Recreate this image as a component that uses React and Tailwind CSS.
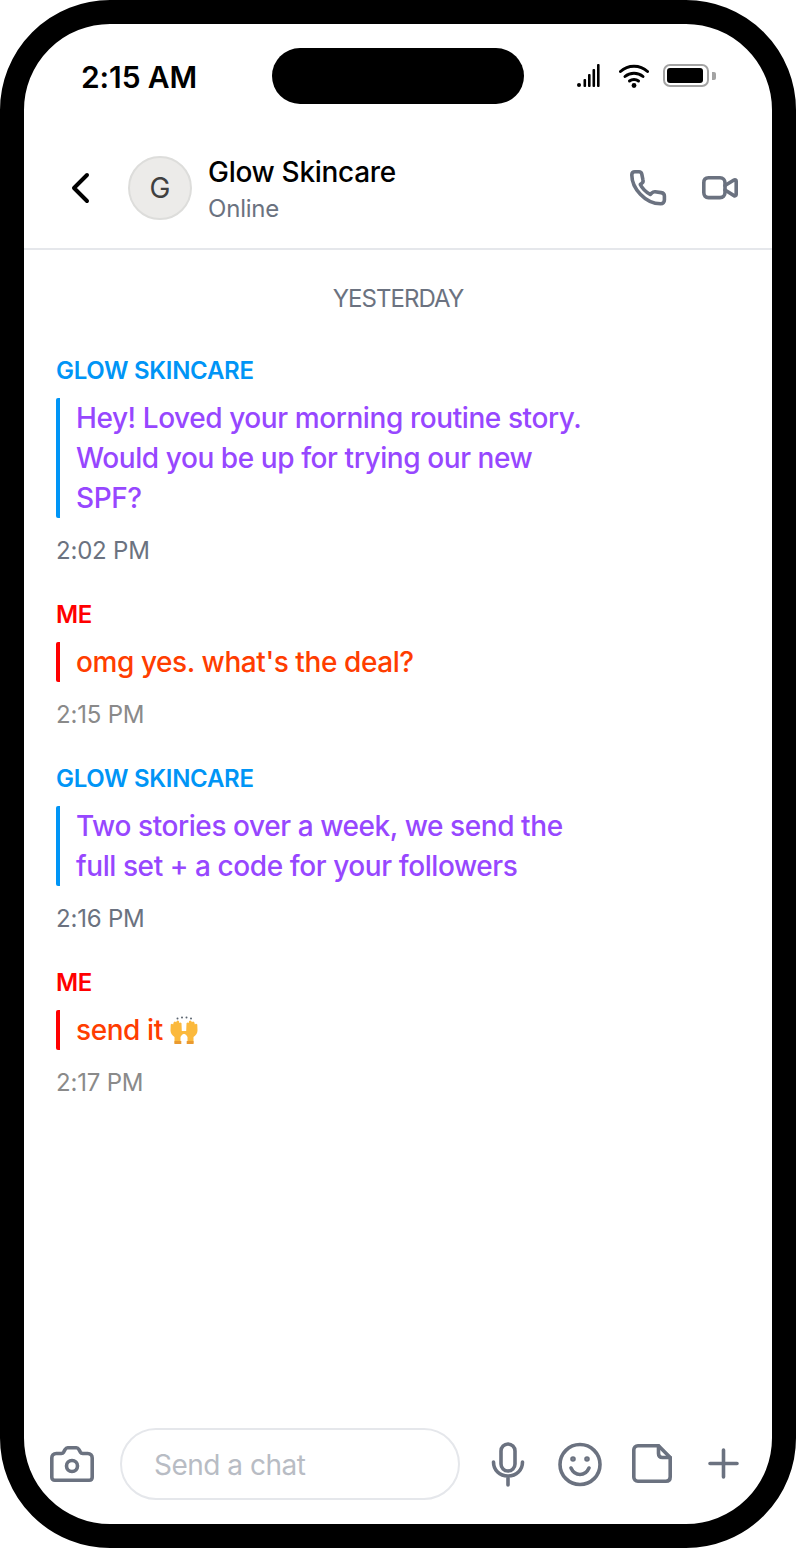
import React from 'react';

const messages = [
  { id: 1, me: false, text: 'Hey! Loved your morning routine story. Would you be up for trying our new SPF?', time: '2:02 PM' },
  { id: 2, me: true, text: "omg yes. what's the deal?", time: '2:15 PM' },
  { id: 3, me: false, text: 'Two stories over a week, we send the full set + a code for your followers', time: '2:16 PM' },
  { id: 4, me: true, text: 'send it', emoji: true, time: '2:17 PM' },
];

const Icon = ({ children }) => (
  <svg
    viewBox="0 0 48 48"
    fill="none"
    stroke="#6b7280"
    strokeWidth="3.6"
    strokeLinecap="round"
    strokeLinejoin="round"
    className="w-12 h-12 shrink-0"
  >
    {children}
  </svg>
);

const hand = 'M1.500 14.500l.2-6q1.200-1.500 2.400 0l.6-2.200q1.200-1.500 2.400 0l.5-1q1.200-1.500 2.400 0l.3 1.800q1.200-1.300 2.200.2l.3 7.700 3.500.2q1.200 1-.3 2l-3 1.500-1.500 2.300v6.500H5.500v-6.500q-4-3-4-6.500z';

const RaisedHands = () => (
  <svg viewBox="0 0 30 28" className="w-[30px] h-7 shrink-0">
    <g fill="#5b6470">
      <circle cx="8.500" cy="2.500" r="1" />
      <circle cx="13" cy="1.500" r="1" />
      <circle cx="17.500" cy="1.500" r="1" />
      <circle cx="22" cy="2.500" r="1" />
    </g>
    <path d={hand} fill="#fbb93c" />
    <path d={hand} fill="#fbb93c" transform="matrix(-1 0 0 1 30 0)" />
    <path d="M5.500 25h6.800v3H5.500zM17.700 25h6.800v3h-6.800z" fill="#ea9a30" />
  </svg>
);

const Message = ({ m }) => (
  <div className="mb-8">
    <div className={`h-8 pt-px text-[24px] leading-8 font-semibold tracking-[-0.3px] ${m.me ? 'text-[#ff0000]' : 'text-[#0095f6]'}`}>
      {m.me ? 'ME' : 'GLOW SKINCARE'}
    </div>
    <div className={`mt-3 border-l-4 rounded-[2px] pl-4 max-w-[540px] text-[28px] font-[450] leading-10 tracking-[-0.42px] ${m.me ? 'border-[#ff0000] text-[#ff3d00]' : 'border-[#0095f6] text-[#9747ff]'}`}>
      {m.emoji ? (
        <span className="flex items-center gap-[6px]">
          {m.text}
          <RaisedHands />
        </span>
      ) : (
        m.text
      )}
    </div>
    <div className={`mt-4 h-8 pt-px text-[24px] leading-8 tracking-[-0.2px] ${m.me ? 'text-[#8a8a8a]' : 'text-[#6b7280]'}`}>{m.time}</div>
  </div>
);

export default function App() {
  return (
    <div className="w-[796px] h-[1548px] bg-white font-['Inter',sans-serif]">
      <div className="relative w-full h-full border-[24px] border-black rounded-[110px] flex flex-col overflow-hidden">
        {/* status bar */}
        <div className="h-20 shrink-0 flex items-center justify-between pl-[57px] pr-[56px] pt-[26px]">
          <span className="text-[30px] font-semibold text-black tracking-[-0.1px]">2:15 AM</span>
          <div className="flex items-center mb-[3px]">
            <svg viewBox="0 0 23 23" className="w-[23px] h-[23px]">
              <g fill="#000">
                <circle cx="2" cy="21" r="2" />
                <rect x="6.500" y="15" width="2.600" height="8" rx="1" />
                <rect x="11" y="10" width="2.600" height="13" rx="1" />
                <rect x="15.500" y="5" width="2.600" height="18" rx="1" />
                <rect x="20" y="0" width="2.600" height="23" rx="1" />
              </g>
            </svg>
            <svg viewBox="0 0 30 24" className="ml-[19px] w-[30px] h-6" fill="none" stroke="#000" strokeWidth="3" strokeLinecap="round">
              <path d="M1.500 7.500C9 0.500 21 0.500 28.500 7.500" />
              <path d="M6 12.500C11 8 19 8 24 12.500" />
              <path d="M10.500 17C13 15 17 15 19.500 17" />
              <circle cx="15" cy="21.500" r="2.400" fill="#000" stroke="none" />
            </svg>
            <div className="ml-[14px] flex items-center gap-[3px]">
              <div className="w-[46px] h-[23px] rounded-[7px] border-2 border-[#a3a3a3] p-[2px] flex">
                <div className="w-[36px] h-full rounded-[3px] bg-black" />
              </div>
              <div className="w-[4px] h-2 bg-[#a3a3a3] rounded-r-[2px]" />
            </div>
          </div>
        </div>
        <div className="absolute left-[248px] top-[24px] w-[252px] h-14 rounded-[28px] bg-black" />

        {/* header */}
        <div className="h-[146px] shrink-0 border-b-2 border-[#e5e7eb] flex items-center pl-8 pr-7 pt-6">
          <svg viewBox="0 0 48 48" fill="none" stroke="#000" strokeWidth="4" strokeLinecap="round" strokeLinejoin="round" className="w-12 h-12 shrink-0">
            <path d="M31 11L18 24l13 13" />
          </svg>
          <div className="ml-6 w-16 h-16 shrink-0 rounded-full bg-[#ecebe9] border-2 border-[#dddddb] flex items-center justify-center text-[28px] text-[#404040]">
            G
          </div>
          <div className="ml-4 flex-1">
            <div className="text-[28px] leading-10 font-medium text-black tracking-[-0.3px]">Glow Skincare</div>
            <div className="h-8 pt-px text-[24px] leading-8 text-[#6b7280] tracking-[-0.2px]">Online</div>
          </div>
          <div className="flex items-center gap-6">
            <Icon>
              <path d="M11 7.800h4c1.500 0 2.500 1 2.800 2.300l1.200 6c.3 1.300-.2 2.500-1.200 3.200l-1.500 1.200c2 4 5.500 7.500 10 10l1.500-1.500c1-1 2-1.300 3.300-1.200l6 .8c2 .3 3.300 1.500 3.300 3.500v4c0 2.200-1.500 3.700-3.700 3.700C21 39.800 7.800 24 7.800 11c0-2 1.300-3.200 3.200-3.200z" />
            </Icon>
            <Icon>
              <path d="M12.500 13.800h11.500c3 0 5 2 5 5v9.800c0 3-2 5-5 5H12.500c-3 0-4.700-2-4.700-5v-9.800c0-3 1.700-5 4.700-5z" />
              <path d="M29 21.500l9-5.500c1-.6 2.200 0 2.200 1v13.600c0 1-1.200 1.600-2.200 1L29 26" />
            </Icon>
          </div>
        </div>

        {/* messages */}
        <div className="flex-1 px-8 pt-8">
          <div className="mb-10 h-8 pt-px text-center text-[24px] leading-8 text-[#6b7280] tracking-[-0.95px]">YESTERDAY</div>
          {messages.map((m) => (
            <Message key={m.id} m={m} />
          ))}
        </div>

        {/* input bar */}
        <div className="shrink-0 flex items-center gap-6 px-6 pb-6">
          <Icon>
            <path d="M3.800 18c0-2.500 1.700-4.500 4.500-4.500h5c1 0 1.800-.5 2.300-1.300l1.400-2.600c.6-1 1.400-1.800 2.600-1.800h8.800c1.200 0 2 .8 2.600 1.800l1.400 2.600c.5.8 1.300 1.300 2.300 1.300h5c2.800 0 4.500 2 4.500 4.500v19.200c0 1.800-1.200 3-3 3H6.800c-1.800 0-3-1.200-3-3z" />
            <circle cx="24" cy="26" r="5.500" />
          </Icon>
          <div className="flex-1 h-[72px] rounded-[36px] border-2 border-[#e5e7eb] flex items-center pl-8 pt-px text-[28px] text-[#b8bcc4] tracking-[-0.5px]">
            Send a chat
          </div>
          <Icon>
            <rect x="17" y="4" width="14" height="27" rx="7" />
            <path d="M9.500 22c0 8 6 14 14.500 14s14.500-6 14.500-14M24 36v9" />
          </Icon>
          <Icon>
            <circle cx="24" cy="24.500" r="20" />
            <path d="M15 28c2 4.500 5 6.500 9 6.500s7-2 9-6.500" />
            <circle cx="17" cy="19" r="1" fill="#6b7280" />
            <circle cx="31" cy="19" r="1" fill="#6b7280" />
          </Icon>
          <Icon>
            <path d="M10 5.800h20.500L42.200 17.500V37c0 2.600-1.600 4.200-4.200 4.200H10c-2.600 0-4.200-1.600-4.200-4.200V10c0-2.600 1.600-4.200 4.200-4.200z" />
            <path d="M30.500 5.800v7.700c0 2.500 1.500 4 4 4h7.700" />
          </Icon>
          <Icon>
            <path d="M23.500 10v27M10 23.500h27" />
          </Icon>
        </div>
      </div>
    </div>
  );
}
